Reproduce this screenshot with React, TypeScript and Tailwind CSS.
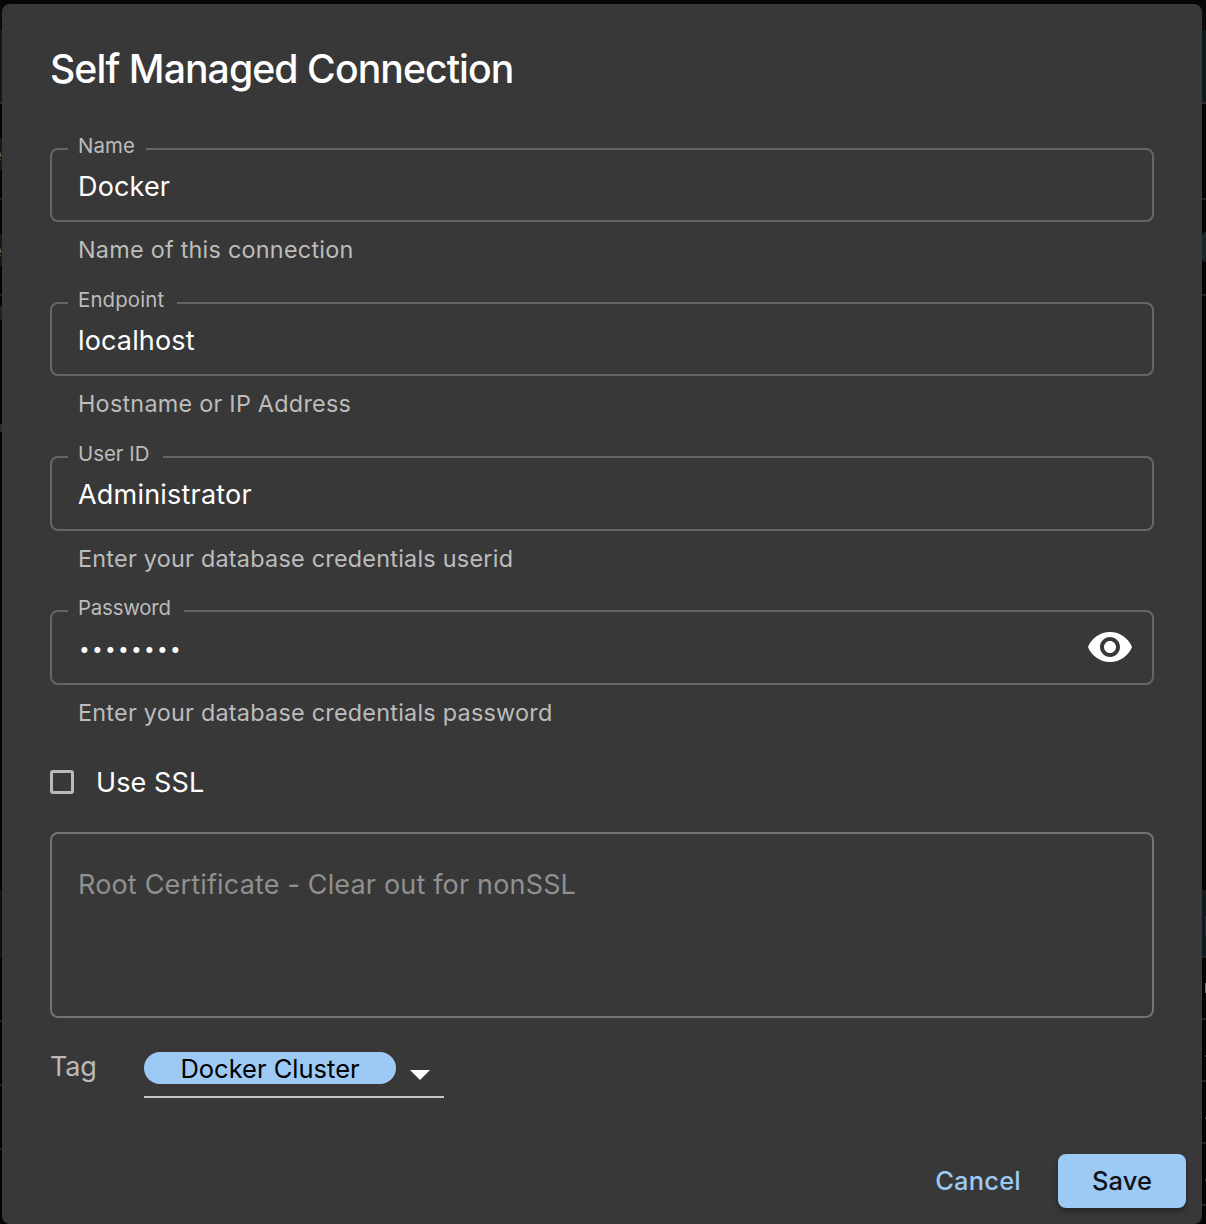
import React from 'react';

type FieldProps = {
  label: string;
  notch: string;
  helper: string;
  labelTracking: string;
  boxHeight: string;
  children: React.ReactNode;
};

function Field({ label, notch, helper, labelTracking, boxHeight, children }: FieldProps) {
  return (
    <div className="flex h-[154px] flex-col">
      <div className={`relative flex shrink-0 items-center justify-between rounded-lg border-2 border-[#666666] pr-[18px] pl-[26px] ${boxHeight}`}>
        <span
          className={`absolute -top-5 left-4 h-8 bg-[#383838] pl-[10px] text-[20.4px] leading-8 whitespace-nowrap text-[#bcbcbc] ${labelTracking} ${notch}`}
        >
          {label}
        </span>
        {children}
      </div>
      <p className="mt-3 pl-7 text-[23.4px] leading-8 tracking-[0.24px] whitespace-nowrap text-[#bcbcbc]">{helper}</p>
    </div>
  );
}

function LeftBackdrop() {
  return (
    <div className="flex w-[2px] shrink-0 flex-col overflow-hidden bg-[#030303] text-[22px] leading-8 text-[#666666]">
      <div className="h-[30px] shrink-0 bg-[#0a0a0a]" />
      <div className="h-[72px] shrink-0 bg-[#10191d]" />
      <div className="h-[2px] shrink-0 bg-[#2b2b2b]" />
      <div className="h-[34px] shrink-0" />
      <div className="flex h-8 shrink-0 justify-end bg-[#10191d]"><span>e</span></div>
      <div className="h-7 shrink-0" />
      <div className="h-[2px] shrink-0 bg-[#222222]" />
      <div className="h-[34px] shrink-0" />
      <div className="flex h-8 shrink-0 justify-end bg-[#10191d]"><span>e</span></div>
      <div className="h-7 shrink-0" />
      <div className="h-[2px] shrink-0 bg-[#222222]" />
      <div className="h-[10px] shrink-0" />
      <div className="h-[14px] shrink-0 bg-[#222222]" />
      <div className="h-[104px] shrink-0" />
      <div className="h-[8px] shrink-0 bg-[#2c2c2c]" />
      <div className="h-[458px] shrink-0" />
      <div className="h-[68px] shrink-0 bg-[#0e1112]" />
      <div className="h-[62px] shrink-0" />
      <div className="h-[2px] shrink-0 bg-[#222222]" />
      <div className="h-[62px] shrink-0" />
      <div className="h-[2px] shrink-0 bg-[#222222]" />
      <div className="h-[62px] shrink-0" />
      <div className="h-[2px] shrink-0 bg-[#222222]" />
    </div>
  );
}

function RightBackdrop() {
  return (
    <div className="flex w-1 shrink-0 flex-col overflow-hidden bg-[#030303]">
      <div className="h-[30px] shrink-0 bg-[#0a0a0a]" />
      <div className="h-[72px] shrink-0 bg-[#10191d]" />
      <div className="h-[2px] shrink-0 bg-[#2b2b2b]" />
      <div className="h-[94px] shrink-0" />
      <div className="h-[2px] shrink-0 bg-[#222222]" />
      <div className="h-8 shrink-0" />
      <div className="h-[30px] shrink-0 rounded-l bg-[#1c2629]" />
      <div className="h-8 shrink-0" />
      <div className="h-[2px] shrink-0 bg-[#222222]" />
      <div className="h-[594px] shrink-0" />
      <div className="h-[6px] shrink-0 bg-[#1a1a1a]" />
      <div className="flex h-[60px] shrink-0 items-center justify-end bg-[#10191d]">
        <div className="h-5 w-px bg-[#263339]" />
      </div>
      <div className="h-[2px] shrink-0 bg-[#222222]" />
      <div className="flex h-[60px] shrink-0 items-center justify-end">
        <div className="h-[10px] w-px bg-[#777777]" />
      </div>
      <div className="h-[2px] shrink-0 bg-[#222222]" />
      {[0, 1, 2].map((row) => (
        <React.Fragment key={row}>
          <div className="flex h-[60px] shrink-0 items-center justify-end pt-3">
            <div className="h-[2px] w-px bg-[#444444]" />
          </div>
          <div className="h-[2px] shrink-0 bg-[#222222]" />
        </React.Fragment>
      ))}
    </div>
  );
}

export default function App() {
  return (
    <div className="flex h-[1224px] w-[1206px] overflow-hidden bg-[#070707] font-['Inter',sans-serif]">
      <LeftBackdrop />
      <div className="flex w-[1200px] shrink-0 flex-col bg-[#070707] pt-1">
        <main className="flex h-[1220px] flex-col rounded-lg bg-[#383838] px-12 pt-10">
          <h1 className="h-[50px] text-[39.2px] leading-[50px] font-medium tracking-[-0.94px] whitespace-nowrap text-white">
            Self Managed Connection
          </h1>

          <div className="mt-[54px] flex flex-col">
            <Field boxHeight="h-[74px]" label="Name" notch="w-[78px]" helper="Name of this connection" labelTracking="tracking-[0.1px]">
              <span className="pt-1 text-[27px] leading-9 tracking-[0.15px] text-white">Docker</span>
            </Field>
            <Field boxHeight="h-[74px]" label="Endpoint" notch="w-[109px]" helper="Hostname or IP Address" labelTracking="tracking-[0.15px]">
              <span className="pt-1 text-[27px] leading-9 tracking-[0.15px] text-white">localhost</span>
            </Field>
            <Field boxHeight="h-[75px]" label="User ID" notch="w-[95px]" helper="Enter your database credentials userid" labelTracking="tracking-[0px]">
              <span className="pt-[3px] text-[27px] leading-9 tracking-[0.2px] text-white">Administrator</span>
            </Field>
            <Field boxHeight="h-[75px]" label="Password" notch="w-[116px]" helper="Enter your database credentials password" labelTracking="tracking-[-0.2px]">
              <span className="pt-1 pl-[1px] text-[19px] leading-9 tracking-[2.3px] text-white">••••••••</span>
              <svg viewBox="0 0 24 24" className="mb-px size-12 shrink-0 fill-white" aria-hidden="true">
                <path d="M12 4.5C7 4.5 2.73 7.61 1 12c1.73 4.39 6 7.5 11 7.5s9.27-3.11 11-7.5c-1.73-4.39-6-7.5-11-7.5zM12 17c-2.76 0-5-2.24-5-5s2.24-5 5-5 5 2.24 5 5-2.24 5-5 5zm0-8c-1.66 0-3 1.34-3 3s1.34 3 3 3 3-1.34 3-3-1.34-3-3-3z" />
              </svg>
            </Field>
          </div>

          <label className="mt-[6px] flex h-6 items-center gap-[22px]">
            <span className="size-6 rounded-[3px] border-[3px] border-[#bababa]" />
            <span className="pt-[2px] text-[27px] leading-9 tracking-[0.1px] whitespace-nowrap text-white">Use SSL</span>
          </label>

          <div className="mt-[38px] h-[186px] shrink-0 rounded-lg border-2 border-[#737373] pt-[33px] pl-[26px]">
            <span className="text-[27px] leading-9 tracking-[0.17px] text-[#909090]">Root Certificate - Clear out for nonSSL</span>
          </div>

          <div className="mt-[30px] flex h-[50px] shrink-0">
            <span className="w-[94px] pt-px text-[27px] leading-9 tracking-[-0.2px] text-[#bababa]">Tag</span>
            <div className="flex h-[50px] w-[300px] border-b-2 border-[#c4c4c4] pt-1">
              <span className="flex h-8 w-[252px] items-center justify-center rounded-full bg-[#9dc9f5] pt-[2px] text-[25.5px] leading-8 tracking-[0px] whitespace-nowrap text-black">
                Docker Cluster
              </span>
              <svg viewBox="0 0 20 10" className="mt-[18px] ml-[14px] h-[10px] w-5 fill-white" aria-hidden="true">
                <path d="M0 0h20L10 10z" />
              </svg>
            </div>
          </div>

          <footer className="mt-14 -mr-8 flex h-[54px] shrink-0 items-center justify-end gap-[37px]">
            <button className="text-[25.5px] leading-8 font-medium tracking-[0.2px] text-[#9dc9f5]">Cancel</button>
            <button className="flex h-[54px] w-32 items-center justify-center rounded-lg bg-[#9dc9f5] text-[25.5px] leading-8 font-medium tracking-[0.1px] text-[#101418] shadow-[0_3px_5px_rgba(0,0,0,0.35)]">
              Save
            </button>
          </footer>
        </main>
      </div>
      <RightBackdrop />
    </div>
  );
}
